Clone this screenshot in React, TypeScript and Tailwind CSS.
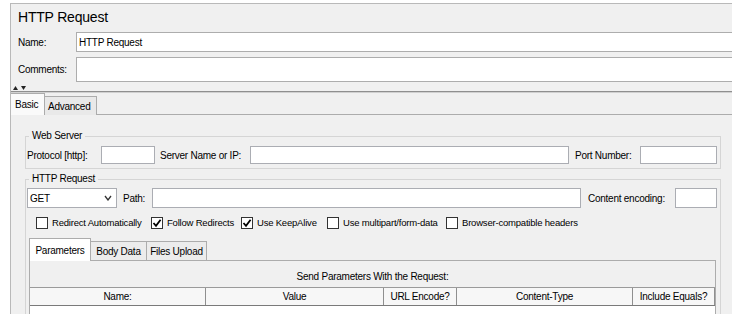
import React from 'react';

const font = { fontFamily: '"Liberation Sans", Arial, sans-serif' };

const Check: React.FC<{ on?: boolean }> = ({ on }) => (
  <span className="w-[12px] h-[12px] border border-[#333] bg-white flex items-center justify-center shrink-0">
    {on && (
      <svg width="10" height="10" viewBox="0 0 10 10">
        <path d="M1.5 5 L4 7.8 L8.6 1.8" fill="none" stroke="#000" strokeWidth="1.8" />
      </svg>
    )}
  </span>
);

const CheckItem: React.FC<{ on?: boolean; label: string; w: string }> = ({ on, label, w }) => (
  <div className={`flex items-center gap-[4px] ${w}`}>
    <Check on={on} />
    <span className="text-[9.5px] tracking-[-0.2px] whitespace-nowrap">{label}</span>
  </div>
);

export default function App() {
  return (
    <div className="w-[732px] h-[314px] overflow-hidden bg-white pt-[3px] pl-[10px] text-[10px] tracking-[-0.25px] text-black" style={font}>
      <div className="h-full border-l border-t border-[#b9b9b9] bg-[#f0f0f0] flex flex-col">
        {/* title */}
        <div className="h-[26px] flex items-center pl-[7px] text-[14px] tracking-[-0.2px] shrink-0">HTTP Request</div>

        {/* name */}
        <div className="h-[24px] flex items-center shrink-0">
          <span className="w-[65px] pl-[7px]">Name:</span>
          <div className="flex-1 h-[20px] border border-[#adadad] border-r-0 bg-white flex items-center pl-[2px]">HTTP Request</div>
        </div>

        {/* comments */}
        <div className="h-[31px] flex items-center shrink-0">
          <span className="w-[65px] pl-[7px]">Comments:</span>
          <div className="flex-1 h-[25px] border border-[#adadad] border-r-0 bg-white" />
        </div>

        {/* splitter arrows */}
        <div className="h-[6px] flex items-center gap-[3px] pl-[2px] shrink-0">
          <svg width="5" height="4" viewBox="0 0 5 4"><path d="M0 4 L2.5 0 L5 4Z" fill="#222" /></svg>
          <svg width="5" height="4" viewBox="0 0 5 4"><path d="M0 0 L2.5 4 L5 0Z" fill="#222" /></svg>
        </div>
        <div className="h-[2px] border-t border-[#8f8f8f] border-b border-b-[#d0d0d0] shrink-0" />

        {/* main tabs */}
        <div className="h-[22px] flex items-end shrink-0">
          <div className="h-[22px] w-[34px] bg-[#fafafa] border-r border-t border-[#acacac] flex items-center pl-[4px] whitespace-nowrap">Basic</div>
          <div className="h-[19px] w-[52px] bg-[#e9e9e9] border-t border-r border-[#acacac] flex items-center pl-[3px] whitespace-nowrap">Advanced</div>
          <div className="flex-1 border-b border-[#acacac]" />
        </div>

        {/* content */}
        <div className="flex-1 pl-[14px] pt-[14px]">
          <fieldset className="w-[696px] border border-[#d5d5d5] px-[1px] pb-[4px]">
            <legend className="px-[3px] ml-[2px] leading-[14px]">Web Server</legend>
            <div className="flex items-center h-[18px] mt-[3px]">
              <span className="w-[74px] whitespace-nowrap">Protocol [http]:</span>
              <div className="w-[54px] h-[18px] border border-[#abadb3] bg-white" />
              <span className="w-[95px] pl-[5px] whitespace-nowrap">Server Name or IP:</span>
              <div className="w-[319px] h-[18px] border border-[#abadb3] bg-white" />
              <span className="w-[71px] pl-[6px] whitespace-nowrap">Port Number:</span>
              <div className="w-[77px] h-[18px] border border-[#abadb3] bg-white" />
            </div>
          </fieldset>

          <fieldset className="w-[696px] border border-b-0 border-[#d5d5d5] px-[1px] mt-[3px]">
            <legend className="px-[3px] ml-[2px] leading-[14px]">HTTP Request</legend>
            <div className="flex items-center h-[20px] mt-[2px]">
              <div className="w-[90px] h-[20px] border border-[#abadb3] bg-white flex items-center justify-between pl-[2px] pr-[4px]">
                <span>GET</span>
                <svg width="8" height="6" viewBox="0 0 8 6"><path d="M1 1 L4 5 L7 1" fill="none" stroke="#333" strokeWidth="1.3" /></svg>
              </div>
              <span className="w-[35px] pl-[6px]">Path:</span>
              <div className="w-[429px] h-[20px] border border-[#abadb3] bg-white" />
              <span className="w-[94px] pl-[7px] whitespace-nowrap">Content encoding:</span>
              <div className="w-[42px] h-[20px] border border-[#abadb3] bg-white" />
            </div>

            <div className="h-[30px] flex items-center pl-[9px]">
              <CheckItem label="Redirect Automatically" w="w-[115px]" />
              <CheckItem on label="Follow Redirects" w="w-[90px]" />
              <CheckItem on label="Use KeepAlive" w="w-[86px]" />
              <CheckItem label="Use multipart/form-data" w="w-[119px]" />
              <CheckItem label="Browser-compatible headers" w="w-[140px]" />
            </div>

            {/* sub tabs */}
            <div className="pl-[2px] pr-[3px]">
              <div className="h-[23px] flex items-end">
                <div className="h-[23px] w-[62px] bg-white border-l border-t border-r border-[#acacac] flex items-center justify-center whitespace-nowrap">Parameters</div>
                <div className="h-[20px] w-[56px] bg-[#ececec] border-t border-r border-b border-[#acacac] flex items-center justify-center whitespace-nowrap">Body Data</div>
                <div className="h-[20px] w-[60px] bg-[#ececec] border-t border-r border-b border-[#acacac] flex items-center justify-center whitespace-nowrap">Files Upload</div>
                <div className="flex-1 border-b border-[#acacac]" />
              </div>
              <div className="border-l border-r border-[#acacac] bg-[#f0f0f0] h-[60px]">
                <div className="h-[26px] flex items-center justify-center pt-[4px]">Send Parameters With the Request:</div>
                <div className="flex h-[19px] border-t border-[#9a9a9a] border-b border-b-[#7a7a7a] bg-[#f7f7f7]">
                  <div className="w-[176px] border-r border-[#8f8f8f] flex items-center justify-center">Name:</div>
                  <div className="w-[178px] border-r border-[#8f8f8f] flex items-center justify-center">Value</div>
                  <div className="w-[73px] border-r border-[#8f8f8f] flex items-center justify-center">URL Encode?</div>
                  <div className="w-[176px] border-r border-[#8f8f8f] flex items-center justify-center">Content-Type</div>
                  <div className="flex-1 border-r border-[#8f8f8f] flex items-center justify-center">Include Equals?</div>
                </div>
                <div className="h-[16px] bg-white" />
              </div>
            </div>
          </fieldset>
        </div>
      </div>
    </div>
  );
}
